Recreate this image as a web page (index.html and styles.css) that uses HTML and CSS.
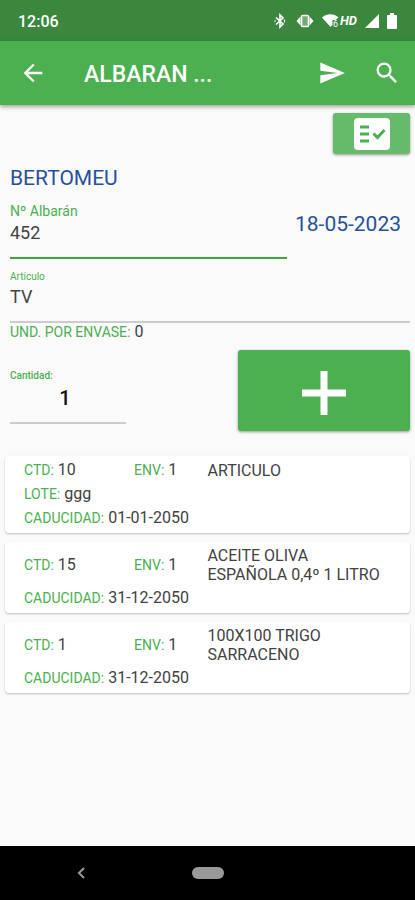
FILE: index.html
```html
<!DOCTYPE html>
<html lang="es">
<head>
<meta charset="utf-8">
<meta name="viewport" content="width=device-width, initial-scale=1">
<title>Albaran</title>
<link rel="stylesheet" href="styles.css">
</head>
<body>
<div class="status-bar">
  <span class="clock">12:06</span>
  <div class="status-icons">
    <svg width="12" height="16" viewBox="0 0 12 16" fill="none" stroke="currentColor" stroke-width="1.6"><path d="M2 4.500l7 6.500-3 3V2l3 3-7 6.500"/><path d="M10.500 6.500v3M1 7.200v1.600" stroke-width="1.200"/></svg>
    <svg width="18" height="14" viewBox="0 0 18 14"><path d="M4.500 2.500L.5 7l4 4.500zM13.500 2.500l4 4.500-4 4.500z" fill="currentColor"/><rect x="5.500" y="1.500" width="7" height="11" rx="1" fill="currentColor" fill-opacity=".3" stroke="currentColor" stroke-width="1.600"/></svg>
    <div class="wifi">
      <svg width="18" height="14" viewBox="0 0 18 14" fill="currentColor"><path d="M0 3.500C5-.8 12-.8 16.500 3.500L13.500 6h-3v5L8.500 13z"/><text x="11" y="13" class="wifi-digit">6</text></svg>
      <span class="hd">HD</span>
    </div>
    <svg width="14" height="14" viewBox="0 0 14 14" fill="currentColor"><path d="M14 0v14H0z"/></svg>
    <svg width="10" height="16" viewBox="0 0 10 16" fill="currentColor"><path d="M3 0h4v2h2a1 1 0 0 1 1 1v12a1 1 0 0 1-1 1H1a1 1 0 0 1-1-1V3a1 1 0 0 1 1-1h2z"/></svg>
  </div>
</div>
<header class="app-bar">
  <button class="icon-button" aria-label="Volver"><svg width="28" height="28" viewBox="0 0 24 24" fill="currentColor"><path d="M20 11H7.830l5.590-5.590L12 4l-8 8 8 8 1.410-1.410L7.830 13H20z"/></svg></button>
  <h1>ALBARAN ...</h1>
  <button class="icon-button send" aria-label="Enviar"><svg width="28" height="28" viewBox="0 0 24 24" fill="currentColor"><path d="M2.010 21L23 12 2.010 3 2 10l15 2-15 2z"/></svg></button>
  <button class="icon-button" aria-label="Buscar"><svg width="28" height="28" viewBox="0 0 24 24" fill="currentColor"><path d="M15.500 14h-.79l-.28-.27A6.470 6.470 0 0 0 16 9.500 6.500 6.500 0 1 0 9.500 16c1.610 0 3.090-.59 4.230-1.570l.27.28v.79l5 4.990L20.490 19zm-6 0a4.500 4.500 0 1 1 0-9 4.500 4.500 0 0 1 0 9z"/></svg></button>
</header>
<main>
  <button class="check-button" aria-label="Revisar lista"><svg width="36" height="32" viewBox="0 0 36 32"><rect width="36" height="32" rx="4" fill="#fff"/><path d="M6 9h9M6 16h9M6 23h9" fill="none" stroke="#4caf50" stroke-width="3"/><path d="M19.500 15.500l4 4 7-7.500" fill="none" stroke="#4caf50" stroke-width="3"/></svg></button>
  <h2 class="client">BERTOMEU</h2>
  <div class="top-row">
    <div class="field number">
      <label for="num">Nº Albarán</label>
      <input id="num" type="text" value="452">
    </div>
    <span class="date">18-05-2023</span>
  </div>
  <div class="field article">
    <label for="art">Artículo</label>
    <input id="art" type="text" value="TV">
  </div>
  <p class="units"><span class="key">UND. POR ENVASE:</span> <span>0</span></p>
  <div class="add-row">
    <div class="field quantity">
      <label for="qty">Cantidad:</label>
      <input id="qty" type="text" value="1">
    </div>
    <button class="add-button" aria-label="Añadir"><svg width="44" height="44" viewBox="0 0 44 44"><path d="M22 0v44M0 22h44" stroke="#fff" stroke-width="7"/></svg></button>
  </div>
  <ul class="lines">
    <li class="card">
      <div class="summary">
        <span><span class="key">CTD:</span> 10</span>
        <span><span class="key">ENV:</span> 1</span>
        <span class="name">ARTICULO</span>
      </div>
      <div><span class="key">LOTE:</span> ggg</div>
      <div><span class="key">CADUCIDAD:</span> 01-01-2050</div>
    </li>
    <li class="card">
      <div class="summary">
        <span><span class="key">CTD:</span> 15</span>
        <span><span class="key">ENV:</span> 1</span>
        <span class="name">ACEITE OLIVA ESPAÑOLA 0,4º 1 LITRO</span>
      </div>
      <div><span class="key">CADUCIDAD:</span> 31-12-2050</div>
    </li>
    <li class="card">
      <div class="summary">
        <span><span class="key">CTD:</span> 1</span>
        <span><span class="key">ENV:</span> 1</span>
        <span class="name">100X100 TRIGO SARRACENO</span>
      </div>
      <div><span class="key">CADUCIDAD:</span> 31-12-2050</div>
    </li>
  </ul>
</main>
<nav class="nav-bar">
  <button class="nav-back" aria-label="Atrás"><svg width="8" height="12" viewBox="0 0 8 12" fill="none" stroke="currentColor" stroke-width="2"><path d="M7 1L2 6l5 5"/></svg></button>
  <button class="nav-home" aria-label="Inicio"></button>
</nav>
</body>
</html>
```
FILE: styles.css
```css
* { box-sizing: border-box; }

body {
  margin: 0;
  min-height: 100vh;
  display: flex;
  flex-direction: column;
  background: #fafafa;
  color: #424242;
  font: 16px/20px Roboto, sans-serif;
}

button {
  display: grid;
  place-items: center;
  margin: 0;
  padding: 0;
  border: 0;
  background: none;
  color: inherit;
}

h1, h2, p, ul { margin: 0; padding: 0; }
svg { display: block; }

.status-bar {
  display: flex;
  align-items: center;
  justify-content: space-between;
  height: 41px;
  padding: 0 18px;
  background: #3b873e;
  color: #fff;
}

.clock { padding-top: 2px; font-size: 16px; font-weight: 500; }
.status-icons { display: flex; align-items: center; gap: 8px; }
.status-icons > :first-child { margin-right: 2px; }
.wifi { display: flex; align-items: center; }
.wifi-digit { font-size: 9px; }
.hd { font-size: 13px; font-weight: 700; font-style: italic; }

.app-bar {
  display: flex;
  align-items: center;
  height: 64px;
  padding: 0 4px 0 9px;
  background: #4caf50;
  color: #fff;
  box-shadow: 0 2px 4px rgba(0, 0, 0, .35);
}

.icon-button { width: 48px; height: 48px; }
.send { margin-right: 7px; }

.app-bar h1 {
  flex: 1;
  padding: 3px 0 0 27px;
  font-size: 23px;
  line-height: 28px;
  font-weight: 500;
}

main {
  flex: 1;
  display: flex;
  flex-direction: column;
  padding: 8px 5px;
}

.check-button {
  align-self: flex-end;
  width: 77px;
  height: 41px;
  border-radius: 3px;
  background: #66bb6a;
  box-shadow: 0 1px 3px rgba(0, 0, 0, .4);
}

.client, .date {
  color: #27509b;
  font-size: 21px;
  line-height: 24px;
  font-weight: 400;
}

.client { margin: 12px 5px 0; }

.top-row {
  display: flex;
  gap: 8px;
  margin: 13px 5px 0;
}

.date { padding: 9px 4px 0 0; }
.number { flex: 1; }

.field { display: flex; flex-direction: column; }

.field label {
  color: #4caf50;
  font-size: 10px;
  line-height: 12px;
}

.field input {
  width: 100%;
  padding: 0;
  border: 0;
  border-bottom: 2px solid #ccc;
  border-radius: 0;
  outline: 0;
  background: none;
  color: #424242;
  font: 18px/22px Roboto, sans-serif;
}

.field.number label { font-size: 14px; line-height: 16px; }
.number input { height: 40px; border-color: #3aa63f; padding-bottom: 12px; }

.article { margin: 12px 0 0 5px; }
.article input { height: 40px; padding-bottom: 12px; }

.units { margin: -1px 5px 0; }
.key { color: #4caf50; font-size: 14px; }

.add-row {
  display: flex;
  align-items: flex-start;
  justify-content: space-between;
  margin: 8px 0 0 5px;
}

.quantity { width: 29%; padding-top: 20px; }
.quantity label { font-weight: 500; }
.quantity input {
  height: 42px;
  padding: 0 6px 8px 0;
  color: #111;
  font-size: 20px;
  font-weight: 500;
  text-align: center;
}

.add-button {
  width: 43%;
  height: 81px;
  padding-top: 4px;
  border-radius: 3px;
  background: #4caf50;
  box-shadow: 0 1px 3px rgba(0, 0, 0, .4);
}

.lines {
  display: flex;
  flex-direction: column;
  gap: 9px;
  margin: 25px 0 0;
  list-style: none;
}

.card {
  display: flex;
  flex-direction: column;
  gap: 4px;
  padding: 4px 19px 5px;
  border-radius: 4px;
  background: #fff;
  box-shadow: 0 1px 2px rgba(0, 0, 0, .25);
}

.summary {
  display: grid;
  grid-template-columns: 3fr 2fr 5fr;
  align-items: center;
}

.name { line-height: 19px; }

.nav-bar {
  display: grid;
  grid-template-columns: 1fr 32px 1fr;
  align-items: center;
  height: 54px;
  background: #000;
  color: #999;
}

.nav-back { justify-self: center; padding-right: 30px; }
.nav-home { height: 12px; border-radius: 6px; background: #999; }
```
